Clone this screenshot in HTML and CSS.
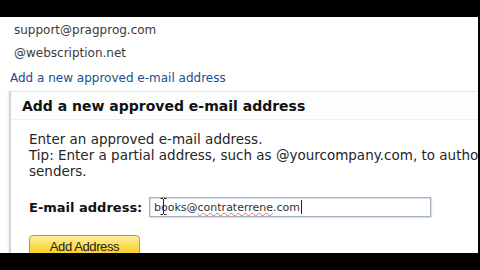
FILE: index.html
```html
<!DOCTYPE html>
<html>
	<head>
		<meta charset="UTF-8">
		<title>Approved senders</title>
		<link rel="stylesheet" href="styles.css">
	</head>
	<body>
		<div id="screen">
			<!--senders-->
			<div class="senders">
				<div class="sender">support@pragprog.com</div>
				<div class="sender">@webscription.net</div>
				<a class="add-link" href="#">Add a new approved e-mail address</a>
			</div>
			<!--panel-->
			<div class="panel">
				<div class="panel-head">Add a new approved e-mail address</div>
				<div class="panel-body">
					<p class="tip">
						Enter an approved e-mail address.<br/>
						Tip: Enter a partial address, such as @yourcompany.com, to authorize all<br/>
						senders.
					</p>
					<div class="field">
						<label class="field-label">E-mail address:</label>
						<div class="field-input">
							<span class="typed">books@<span class="misspelt">contraterrene</span>.com</span><span class="caret"></span>
							<!--mouse cursor-->
							<svg class="ibeam" width="7" height="17" viewBox="0 0 7 17">
								<path d="M0.5 0.5h2.5M4 0.5h2.5M3.5 1v15M0.5 16.5h2.5M4 16.5h2.5" stroke="#222" stroke-width="1" fill="none"/>
							</svg>
						</div>
					</div>
					<div class="button">Add Address</div>
				</div>
			</div>
		</div>
	</body>
</html>
```
FILE: styles.css
```css
body,div,p,a,label,span{
	margin: 0px;
	padding: 0px;
}
body{
	background-color: #000;
	font-family: "DejaVu Sans", Verdana, sans-serif;
	overflow: hidden;
}
#screen{
	margin-top: 17px;
	width: 478px;
	height: 236px;
	background-color: #fff;
	overflow: hidden;
}
/*senders start*/
#screen .senders{
	padding-top: 2px;
}
#screen .sender{
	padding-left: 14px;
	height: 23px;
	line-height: 23px;
	font-size: 12px;
	color: #3a3a3a;
	white-space: nowrap;
}
#screen .add-link{
	display: block;
	margin-top: 2px;
	padding-left: 10px;
	height: 23px;
	line-height: 23px;
	font-size: 12px;
	color: #1d4d8c;
	text-decoration: none;
	white-space: nowrap;
}
/*senders end*/

/*panel start*/
#screen .panel{
	margin: 1px 0 0 9px;
	width: 520px;
	border-top: 1px solid #e6eaec;
	border-left: 2px solid #d6d6d6;
	box-shadow: -1px 0 2px rgba(0, 0, 0, 0.08);
}
#screen .panel-head{
	padding: 2px 0 0 11px;
	height: 25px;
	line-height: 25px;
	font-size: 14px;
	font-weight: bold;
	color: #111;
	border-bottom: 1px solid #eceff0;
	background-color: #fcfdfd;
	white-space: nowrap;
}
#screen .panel-body{
	padding: 11px 0 0 18px;
}
#screen .tip{
	font-size: 13.5px;
	line-height: 16px;
	color: #262626;
	white-space: nowrap;
}
#screen .field{
	margin-top: 18px;
	display: flex;
	align-items: center;
}
#screen .field-label{
	width: 120px;
	font-size: 13px;
	font-weight: bold;
	color: #111;
	white-space: nowrap;
}
#screen .field-input{
	width: 276px;
	height: 18px;
	padding-left: 4px;
	font-size: 11px;
	color: #333;
	border: 1px solid #a7b2c0;
	box-shadow: inset 1px 1px 1px #d6dde6, 1px 1px 1px #d8dfe6;
	display: flex;
	align-items: center;
	position: relative;
}
#screen .field-input .misspelt{
	text-decoration: underline wavy #e07070;
	text-decoration-thickness: 1px;
}
#screen .field-input .caret{
	display: inline-block;
	width: 1px;
	height: 14px;
	margin-left: 1px;
	background-color: #222;
}
#screen .field-input .ibeam{
	position: absolute;
	left: 10px;
	top: 0px;
}
#screen .button{
	margin-top: 18px;
	width: 109px;
	height: 24px;
	line-height: 21px;
	font-family: "Liberation Sans", Arial, sans-serif;
	font-size: 13px;
	letter-spacing: -0.4px;
	text-align: center;
	color: #222;
	border: 1px solid #c09a20;
	border-radius: 4px;
	background: linear-gradient(#fdeea0, #fbd943 50%, #f3c210);
}
/*panel end*/
```
